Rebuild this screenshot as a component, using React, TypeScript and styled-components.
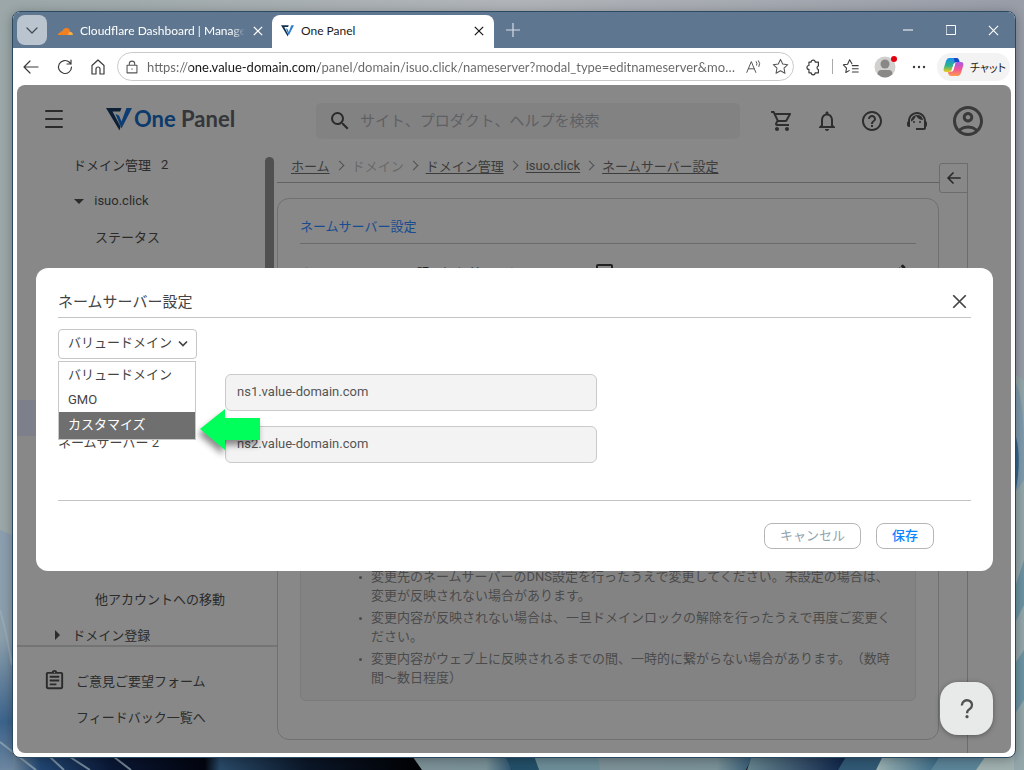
import React from 'react';
import styled, { createGlobalStyle } from 'styled-components';
import {
  MdOutlineShoppingCart,
  MdNotificationsNone,
  MdHelpOutline,
  MdSupportAgent,
  MdOutlineAccountCircle,
  MdSearch,
  MdOutlineAssignment,
  MdArrowDropDown,
  MdArrowRight,
  MdEdit,
} from 'react-icons/md';

const appFont = `Roboto, "Noto Sans CJK JP", sans-serif`;
const chromeFont = `Lato, "Noto Sans CJK JP", sans-serif`;

const GlobalStyle = createGlobalStyle`
  * { box-sizing: border-box; }
  body { margin: 0; font-family: ${appFont}; font-size: 13px; color: #2b2b2b; text-spacing-trim: space-all; }
  button, input, select { font: inherit; color: inherit; }
  button { padding: 0; border: 0; background: none; cursor: pointer; }
  ul, ol { margin: 0; padding: 0; list-style: none; }
  h1, h2, p { margin: 0; font-weight: 400; }
  svg { display: block; flex: none; }
`;

/* ---------- desktop and browser window ---------- */

const Desktop = styled.div`
  position: relative;
  min-height: 100vh;
  padding: 11px 8px 12px 12px;
  display: flex;
  overflow: hidden;
`;

const Wallpaper = styled.svg`
  position: absolute;
  inset: 0;
  width: 100%;
  height: 100%;
`;

const BrowserWindow = styled.div`
  position: relative;
  flex: 1;
  min-width: 0;
  display: flex;
  flex-direction: column;
  background: #fff;
  border: 1px solid #2b4a61;
  border-radius: 8px;
  overflow: hidden;
  box-shadow: 0 2px 12px rgba(0, 0, 0, 0.3);
`;

const TitleBar = styled.div`
  height: 36px;
  padding-left: 4px;
  display: flex;
  align-items: flex-end;
  background: #5e768f;
  color: #fff;
  font-family: ${chromeFont};
`;

const TabSearch = styled.button`
  width: 30px;
  height: 30px;
  margin-bottom: 3px;
  display: grid;
  place-items: center;
  border-radius: 8px;
  background: #b9c4cf;
  color: #454c54;
`;

const Tab = styled.div<{ $active?: boolean }>`
  width: ${(p) => (p.$active ? 222 : 225)}px;
  height: 33px;
  padding: ${(p) => (p.$active ? '0 9px 2px' : '0 8px 2px 10px')};
  display: flex;
  align-items: center;
  gap: 7px;
  font-size: 12px;
  border-radius: 8px 8px 0 0;
  background: ${(p) => (p.$active ? '#fff' : 'none')};
  color: ${(p) => (p.$active ? '#1b1b1b' : '#fff')};
`;

const TabTitle = styled.span<{ $fade?: boolean }>`
  flex: 1;
  min-width: 0;
  overflow: hidden;
  white-space: nowrap;
  ${(p) => p.$fade && 'mask-image: linear-gradient(to right, #000 92%, transparent);'}
`;

const IconButton = styled.button<{ $w?: number }>`
  width: ${(p) => p.$w ?? 24}px;
  height: 28px;
  flex: none;
  display: grid;
  place-items: center;
`;

const NewTabButton = styled(IconButton)`
  height: 36px;
  color: #d5dde5;
`;

const WindowButtons = styled.div`
  margin-left: auto;
  display: flex;
  height: 36px;
  align-items: center;
`;

const Toolbar = styled.div`
  height: 37px;
  padding: 0 5px 0 1px;
  display: flex;
  align-items: center;
  color: #3b3b3b;
`;

const AddressBar = styled.div`
  flex: 1;
  min-width: 0;
  height: 29px;
  margin-left: 3px;
  padding: 0 0 0 2px;
  display: flex;
  align-items: center;
  border: 1px solid #c9c9c9;
  border-radius: 15px;
  color: #555;
`;

const AddressInput = styled.input`
  flex: 1;
  min-width: 0;
  margin: 0 2px 0 3px;
  padding: 0;
  border: 0;
  outline: 0;
  font-family: ${chromeFont};
  font-size: 13px;
  text-overflow: ellipsis;
  color: transparent;
  background: linear-gradient(to right, #666 43px, #151515 43px, #151515 172px, #666 172px);
  background-clip: text;
`;

const Divider = styled.span`
  width: 1px;
  height: 15px;
  background: #aaa;
`;

const Avatar = styled.button`
  position: relative;
  width: 22px;
  height: 22px;
  margin: 0 11px 0 5px;
`;

const AvatarDot = styled.span`
  position: absolute;
  top: 0;
  right: -1px;
  width: 6px;
  height: 6px;
  border-radius: 50%;
  background: #e3000f;
`;

const ChatButton = styled.button`
  height: 28px;
  width: 73px;
  margin-left: 6px;
  padding: 0 0 0 6px;
  display: flex;
  align-items: center;
  gap: 6px;
  border-radius: 14px;
  background: #f3f3f3;
  font-size: 11px;
  font-feature-settings: 'palt';
  white-space: nowrap;
  color: #222;
`;

/* ---------- site page ---------- */

const Page = styled.div`
  position: relative;
  flex: 1;
  margin: 0 4px 4px;
  display: flex;
  flex-direction: column;
  background: #888;
  border-radius: 8px;
  overflow: hidden;
`;

const SiteHeader = styled.header`
  height: 62px;
  padding: 6px 25px 0 28px;
  display: flex;
  align-items: center;
`;

const MenuButton = styled.button`
  width: 18px;
  height: 18px;
  margin-right: 43px;
`;

const Brand = styled.a`
  width: 210px;
  display: flex;
  align-items: center;
  gap: 2px;
  font: 700 22px/24px Lato, sans-serif;
  text-decoration: none;
  color: #34363a;
  white-space: nowrap;
`;

const BrandLead = styled.span`
  color: #0c3a6b;
`;

const SearchBox = styled.label`
  width: 424px;
  height: 36px;
  margin: 4px auto 0 0;
  padding: 0 12px;
  display: flex;
  align-items: center;
  gap: 8px;
  border-radius: 5px;
  background: #828282;
`;

const SearchInput = styled.input`
  flex: 1;
  min-width: 0;
  padding: 0 0 1px;
  border: 0;
  outline: 0;
  background: none;
  font-size: 15px;
  &::placeholder {
    color: #5f6064;
    opacity: 1;
  }
`;

const HeaderIcons = styled.div`
  display: flex;
  align-items: center;
  gap: 21px;
  padding-top: 4px;
  color: #2e2e2e;
`;

const AccountButton = styled.button`
  color: #3a3a3a;
`;

const Body = styled.div`
  flex: 1;
  display: flex;
`;

const Sidebar = styled.nav`
  width: 260px;
  flex: none;
  display: flex;
  flex-direction: column;
`;

const TreePane = styled.div`
  flex: 1 1 0;
  display: flex;
  overflow: hidden;
`;

const Tree = styled.ul`
  flex: 1;
  display: flex;
  flex-direction: column;
`;

const TreeItem = styled.li<{ $indent: number; $selected?: boolean; $gap?: boolean }>`
  height: 36px;
  flex: none;
  margin-top: ${(p) => (p.$gap ? 145 : 0)}px;
  padding: 0 0 1px ${(p) => p.$indent}px;
  display: flex;
  align-items: center;
  background: ${(p) => (p.$selected ? '#7d7f8a' : 'none')};
`;

const TreeLink = styled.a`
  color: #2b2b2b;
  text-decoration: none;
`;

const Count = styled.span`
  margin-left: 10px;
`;

const ScrollThumb = styled.div`
  width: 9px;
  height: 240px;
  margin: 10px 3px 0 0;
  border-radius: 5px;
  background: #505050;
`;

const SideFooter = styled.ul`
  height: 108px;
  padding-top: 15px;
  border-top: 2px solid #747474;
`;

const SideFooterItem = styled.li<{ $indent: number }>`
  height: 36px;
  padding-left: ${(p) => p.$indent}px;
  display: flex;
  align-items: center;
  gap: 10px;
`;

const Main = styled.main`
  flex: 1;
  min-width: 0;
  display: flex;
  flex-direction: column;
`;

const Breadcrumb = styled.ol`
  height: 36px;
  padding: 1px 0 0 14px;
  display: flex;
  align-items: center;
  border-bottom: 1px solid #626262;
  white-space: nowrap;
`;

const Crumb = styled.li`
  display: flex;
  align-items: center;
  color: #686868;
  & + &::before {
    content: '';
    width: 6px;
    height: 6px;
    margin: 0 9px 0 6px;
    border: solid #505050;
    border-width: 1px 1px 0 0;
    rotate: 45deg;
  }
`;

const CrumbLink = styled.a`
  color: #3c3c3c;
  text-decoration: underline;
  text-underline-offset: 2px;
`;

const Card = styled.section`
  flex: 1;
  margin: 15px 0 13px;
  padding: 16px 22px 38px;
  display: flex;
  flex-direction: column;
  border: 1px solid #707070;
  border-radius: 12px;
`;

const CardTitle = styled.h1`
  height: 29px;
  font-size: 13px;
  line-height: 24px;
  color: #174c90;
  border-bottom: 1px solid #6b6b6b;
`;

const StatusRow = styled.div`
  height: 36px;
  margin-top: 10px;
  padding-right: 8px;
  display: flex;
  align-items: center;
  font-size: 13px;
  color: #222;
`;

const HelpBox = styled.span`
  width: 17px;
  height: 17px;
  margin: 0 auto 0 24px;
  display: grid;
  place-items: center;
  border: 2px solid #222;
  border-radius: 2px;
  font-size: 12px;
`;

const Notes = styled.ul`
  height: 180px;
  margin-top: auto;
  padding: 0 22px 13px 58px;
  display: flex;
  flex-direction: column;
  justify-content: flex-end;
  gap: 3px;
  border: 1px solid #7b7b7b;
  border-radius: 6px;
  background: #848383;
  line-height: 19px;
  color: #4b4b4b;
`;

const Note = styled.li`
  display: flex;
  gap: 9px;
  &::before {
    content: '';
    width: 3px;
    height: 3px;
    margin-top: 9px;
    flex: none;
    border-radius: 50%;
    background: #4a4a4a;
  }
`;

const NoteText = styled.p`
  flex: 1;
`;

const ToolRail = styled.aside`
  width: 29px;
  margin: 16px 43px 0 0;
  border-right: 1px solid #6c6c6c;
`;

const CollapseButton = styled.button`
  width: 29px;
  height: 30px;
  display: grid;
  place-items: center;
  border: 1px solid #6c6c6c;
  border-radius: 3px 0 0 3px;
`;

const HelpButton = styled.button`
  position: absolute;
  right: 18px;
  bottom: 18px;
  width: 53px;
  height: 53px;
  display: grid;
  place-items: center;
  border-radius: 18px;
  background: #e8eaea;
  color: #505252;
  box-shadow: 0 1px 5px rgba(0, 0, 0, 0.35);
`;

/* ---------- dialog ---------- */

const Scrim = styled.div`
  position: absolute;
  inset: 0;
  padding: 1px 18px 0 19px;
  display: flex;
  align-items: center;
`;

const Dialog = styled.div`
  flex: 1;
  padding: 20px 22px 22px;
  background: #fff;
  border-radius: 12px;
  color: #444;
`;

const DialogHeader = styled.div`
  height: 30px;
  padding-bottom: 3px;
  display: flex;
  align-items: center;
  justify-content: space-between;
  border-bottom: 1px solid #c4c4c4;
`;

const DialogTitle = styled.h2`
  padding-bottom: 2px;
  font-size: 15px;
`;

const CloseButton = styled.button`
  width: 24px;
  height: 24px;
  display: grid;
  place-items: center;
`;

const Picker = styled.div`
  position: relative;
  width: 139px;
  margin-top: 11px;
`;

const PickerSelect = styled.select`
  width: 100%;
  height: 30px;
  padding: 0 0 3px 9px;
  appearance: none;
  border: 1px solid #c6c6c6;
  border-radius: 4px;
  background: #fff;
`;

const PickerArrow = styled.svg`
  position: absolute;
  top: 11px;
  right: 9px;
  pointer-events: none;
`;

const OptionList = styled.ul`
  position: absolute;
  z-index: 1;
  top: 32px;
  left: 0;
  width: 138px;
  border: 1px solid #c8c8c8;
  background: #fff;
`;

const Option = styled.li<{ $active?: boolean }>`
  height: ${(p) => (p.$active ? 27 : 25)}px;
  padding-left: 9px;
  line-height: 26px;
  background: ${(p) => (p.$active ? '#6f6f6f' : 'none')};
  color: ${(p) => (p.$active ? '#fff' : '#444')};
`;

const Fields = styled.div`
  display: flex;
  flex-direction: column;
  gap: 15px;
  margin-top: 15px;
  padding-bottom: 37px;
  border-bottom: 1px solid #c4c4c4;
`;

const Field = styled.label`
  display: flex;
  height: 37px;
`;

const FieldLabel = styled.span`
  width: 167px;
  line-height: 33px;
`;

const FieldInput = styled.input`
  width: 372px;
  padding: 0 11px 2px;
  border: 1px solid #cacaca;
  border-radius: 6px;
  background: #f3f3f3;
  color: #555;
`;

const Actions = styled.div`
  display: flex;
  justify-content: flex-end;
  gap: 15px;
  margin-top: 22px;
  padding-right: 37px;
`;

const ActionButton = styled.button<{ $primary?: boolean }>`
  height: 26px;
  padding: 0 15px 3px;
  border: 1px solid #b5b5b5;
  border-radius: 8px;
  font-weight: ${(p) => (p.$primary ? 500 : 400)};
  color: ${(p) => (p.$primary ? '#0a84ff' : '#90a4ae')};
`;

const Pointer = styled.svg`
  position: absolute;
  z-index: 2;
  top: 78px;
  left: 140px;
  overflow: visible;
  filter: drop-shadow(-2px 5px 3px rgba(0, 0, 0, 0.45));
`;

const Cross = ({ size, width = 1.2 }: { size: number; width?: number }) => (
  <svg width={size} height={size} viewBox="0 0 12 12" fill="none" stroke="currentColor" strokeWidth={width} aria-hidden="true">
    <path d="M1 1l10 10M11 1L1 11" />
  </svg>
);

const Line = ({ d, size = 20, width = 1.2, box = 20 }: { d: string; size?: number; width?: number; box?: number }) => (
  <svg
    width={size}
    height={size}
    viewBox={`0 0 ${box} ${box}`}
    fill="none"
    stroke="currentColor"
    strokeWidth={width}
    strokeLinecap="round"
    strokeLinejoin="round"
    aria-hidden="true"
  >
    <path d={d} />
  </svg>
);

const PanelMark = ({ width, height, dark, blue }: { width: number; height: number; dark: string; blue: string }) => (
  <svg width={width} height={height} viewBox="0 0 26 23" aria-hidden="true">
    <path d="M0 0h15.500l-1.300 3.500H6.500l8 15-1 4z" fill={dark} />
    <path d="M9.500 6l3.500 1.500 2.500 6L20.500 0H26L15.500 20.500z" fill={blue} />
  </svg>
);

const Scenery = () => (
  <Wallpaper viewBox="0 0 1024 770" preserveAspectRatio="none" aria-hidden="true">
    <defs>
      <linearGradient id="sky">
        <stop offset="0" stopColor="#9ba7a8" />
        <stop offset="0.5" stopColor="#b1b5b9" />
        <stop offset="1" stopColor="#989da8" />
      </linearGradient>
      <linearGradient id="leftPetal" x2="0" y2="1">
        <stop offset="0" stopColor="#8c9fb0" />
        <stop offset="0.45" stopColor="#8c9fac" />
        <stop offset="0.8" stopColor="#3c648c" />
        <stop offset="1" stopColor="#6c86a0" />
      </linearGradient>
      <linearGradient id="floor">
        <stop offset="0" stopColor="#8fa2ac" />
        <stop offset="0.04" stopColor="#214673" />
        <stop offset="0.11" stopColor="#0a1734" />
        <stop offset="0.2" stopColor="#03050f" />
        <stop offset="0.215" stopColor="#294a68" />
        <stop offset="0.3" stopColor="#0b1728" />
        <stop offset="0.4" stopColor="#020307" />
      </linearGradient>
      <linearGradient id="petalA">
        <stop offset="0" stopColor="#7d9298" />
        <stop offset="0.75" stopColor="#7a9298" />
        <stop offset="1" stopColor="#2d5571" />
      </linearGradient>
      <linearGradient id="petalB">
        <stop offset="0" stopColor="#66858f" />
        <stop offset="1" stopColor="#0a1f46" />
      </linearGradient>
      <linearGradient id="petalC">
        <stop offset="0" stopColor="#9db3b4" />
        <stop offset="1" stopColor="#2f6281" />
      </linearGradient>
    </defs>
    <rect width="1024" height="770" fill="url(#sky)" />
    <path d="M0 750h1024v20H0z" fill="url(#floor)" />
    <path d="M0 530l13 5v235H0z" fill="url(#leftPetal)" />
    <path d="M0 610q6 20 12 55M0 742l36 28M50 757l14 13M70 757l20 13M114 757l17 13" stroke="#9dafbb" strokeWidth="2" fill="none" opacity="0.7" />
    <path d="M408 750h96l8 20h-90z" fill="url(#petalA)" />
    <path d="M502 750h32l5 20h-27z" fill="#235069" />
    <path d="M532 750h68v20h-61z" fill="#6d8e99" />
    <path d="M598 750h158l-10 20H600z" fill="url(#petalA)" />
    <path d="M754 750h98l-12 20h-93z" fill="url(#petalB)" />
    <path d="M850 750h38l-10 20h-40z" fill="#315a76" />
    <path d="M886 750h60l-13 20h-57z" fill="url(#petalC)" />
    <path d="M944 750h48l-14 20h-47z" fill="#5c8599" />
    <path d="M990 750h34v20h-48z" fill="#a0b1b0" />
    <path d="M1014 375q6 1 10 6v389h-10z" fill="#94a7aa" />
    <path d="M1014 380q9 12 10 60v40l-10 14z" fill="#7f9bad" />
    <path d="M1014 430q9 25 1 65z" fill="#34678f" />
    <path d="M1024 560v45l-10 20v-35zM1024 650v50l-10 15v-50z" fill="#6c94a4" />
  </Wallpaper>
);

const notes = [
  '変更先のネームサーバーのDNS設定を行ったうえで変更してください。未設定の場合は、変更が反映されない場合があります。',
  '変更内容が反映されない場合は、一旦ドメインロックの解除を行ったうえで再度ご変更ください。',
  '変更内容がウェブ上に反映されるまでの間、一時的に繋がらない場合があります。（数時間〜数日程度）',
];

const crumbs = [
  { text: 'ホーム', link: true },
  { text: 'ドメイン', link: false },
  { text: 'ドメイン管理', link: true },
  { text: 'isuo.click', link: true },
  { text: 'ネームサーバー設定', link: true },
];

const starPath = 'M10 2.500l2.300 4.900 5.300.7-3.900 3.700 1 5.300L10 14.500l-4.700 2.600 1-5.300L2.400 8.100l5.300-.7z';

export default function App() {
  return (
    <Desktop>
      <GlobalStyle />
      <Scenery />
      <BrowserWindow>
        <TitleBar>
          <TabSearch aria-label="タブの検索">
            <Line d="M5 8l5 5 5-5" width={1.300} />
          </TabSearch>
          <Tab>
            <svg width="16" height="16" viewBox="0 0 16 16" aria-hidden="true">
              <path d="M1 12c0-1.600 1-2.500 2.300-2.600.1-1 1.300-1.400 2-.9C6 6 7.600 5 9.400 5c2 0 3.300 1.300 3.600 3l-1.600 4z" fill="#f38020" />
              <path d="M11 12l1-3c2-.6 3.800.8 3.900 3z" fill="#fbad41" />
            </svg>
            <TabTitle $fade>Cloudflare Dashboard | Manage Yo</TabTitle>
            <IconButton $w={12} aria-label="タブを閉じる"><Cross size={10} width={1.500} /></IconButton>
          </Tab>
          <Tab $active>
            <PanelMark width={13} height={12} dark="#12304f" blue="#2f7fd0" />
            <TabTitle>One Panel</TabTitle>
            <IconButton $w={12} aria-label="タブを閉じる"><Cross size={10} width={1.500} /></IconButton>
          </Tab>
          <NewTabButton $w={38} aria-label="新しいタブ">
            <Line d="M7 0v14M0 7h14" size={14} box={14} />
          </NewTabButton>
          <WindowButtons>
            <IconButton $w={43} aria-label="最小化"><Line d="M0 5h10" size={10} box={10} width={1} /></IconButton>
            <IconButton $w={43} aria-label="最大化"><Line d="M.5.5h9v9h-9z" size={10} box={10} width={1} /></IconButton>
            <IconButton $w={43} aria-label="閉じる"><Cross size={11} /></IconButton>
          </WindowButtons>
        </TitleBar>

        <Toolbar>
          <IconButton $w={34} aria-label="戻る"><Line d="M17 10H3M9 4l-6 6 6 6" /></IconButton>
          <IconButton $w={34} aria-label="更新"><Line d="M16.500 10a6.500 6.500 0 1 1-2-4.700L16 7M16 3v4h-4" /></IconButton>
          <IconButton $w={32} aria-label="ホーム"><Line d="M4 8.500l6-5.500 6 5.500V17h-4v-5a2 2 0 0 0-4 0v5H4z" /></IconButton>
          <AddressBar>
            <IconButton aria-label="サイト情報">
              <Line d="M4.500 8h11v8.500h-11zM7 8V6.500a3 3 0 0 1 6 0V8M10 12v.5" size={18} />
            </IconButton>
            <AddressInput
              aria-label="アドレス"
              defaultValue="https://one.value-domain.com/panel/domain/isuo.click/nameserver?modal_type=editnameserver&modal_id=1"
            />
            <IconButton $w={26} aria-label="音声で読み上げる">
              <Line d="M2 16L7 4l5 12M4 12h6M12.500 4q1.500 2 .5 4M15 3q2.500 3 .5 6.500" size={18} width={1.100} />
            </IconButton>
            <IconButton $w={26} aria-label="お気に入りに追加"><Line d={starPath} size={19} width={1.100} /></IconButton>
          </AddressBar>
          <IconButton $w={38} aria-label="拡張機能">
            <Line d="M5.500 4.500h2.500a2.200 2.200 0 0 1 4.400 0H16v4.200a2.200 2.200 0 0 0 0 4.200V16.500h-3.600a2.200 2.200 0 0 1-4.400 0H5.500v-3.800a2.200 2.200 0 0 1 0-4.400z" size={18} width={1.300} />
          </IconButton>
          <Divider />
          <IconButton $w={36} aria-label="お気に入り">
            <Line d="M11 6.500L8.500 2 6.200 6.900l-4.700.7 3.500 3.600-.8 5L8 14M11.500 8.500H18M11.500 12H18M11.500 15.500H18" size={18} />
          </IconButton>
          <Avatar aria-label="プロファイル">
            <svg width="22" height="22" viewBox="0 0 22 22" aria-hidden="true">
              <circle cx="11" cy="11" r="10.500" fill="#d2d0ce" />
              <circle cx="11" cy="8" r="4.500" fill="#8a8886" />
              <path d="M3.500 18.300q0-4.300 4-4.300h7q4 0 4 4.300Q15 21.500 11 21.500t-7.500-3.200z" fill="#8a8886" />
            </svg>
            <AvatarDot />
          </Avatar>
          <IconButton $w={24} aria-label="設定など">
            <svg width="14" height="4" viewBox="0 0 14 4" fill="currentColor" aria-hidden="true">
              <circle cx="2" cy="2" r="1.200" /><circle cx="7" cy="2" r="1.200" /><circle cx="12" cy="2" r="1.200" />
            </svg>
          </IconButton>
          <ChatButton>
            <svg width="21" height="20" viewBox="0 0 21 20" aria-hidden="true">
              <defs>
                <linearGradient id="copilotLeft" x2="0" y2="1">
                  <stop offset="0" stopColor="#1a8df0" /><stop offset="0.55" stopColor="#2bb58b" /><stop offset="1" stopColor="#f6c915" />
                </linearGradient>
                <linearGradient id="copilotRight" x2="0" y2="1">
                  <stop offset="0" stopColor="#a45ae8" /><stop offset="0.5" stopColor="#f0559a" /><stop offset="1" stopColor="#ff9a4a" />
                </linearGradient>
              </defs>
              <path d="M6 1h7q2 0 2.600 2l.6 2h-3q-2 0-2.600 2l-2 6q-.6 2-2.600 2H3Q0 15 .7 11.500L3 4Q4 1 6 1z" fill="url(#copilotLeft)" />
              <path d="M11 1h2.500q2 0 2.500 2l.6 2h-3q-1.500 0-2 1z" fill="#1647c8" />
              <path d="M15 19H8q-2 0-2.600-2l-.4-2h2q2 0 2.600-2l2-6q.6-2 2.600-2H18q3 0 2.300 3.500L18 16q-1 3-3 3z" fill="url(#copilotRight)" />
              <path d="M10.500 7.500l2-1.500-2 7q-.6 1.700-2 1.500z" fill="#fff" />
            </svg>
            チャット
          </ChatButton>
        </Toolbar>

        <Page>
          <SiteHeader>
            <MenuButton aria-label="メニュー">
              <Line d="M1 1h16M1 9h16M1 17h16" size={18} box={18} width={2} />
            </MenuButton>
            <Brand href="#home">
              <PanelMark width={26} height={23} dark="#0d2036" blue="#0d3d72" />
              <span><BrandLead>One</BrandLead> Panel</span>
            </Brand>
            <SearchBox>
              <MdSearch size={24} color="#2a2a2a" aria-hidden="true" />
              <SearchInput aria-label="検索" placeholder="サイト、プロダクト、ヘルプを検索" />
            </SearchBox>
            <HeaderIcons>
              <button aria-label="カート"><MdOutlineShoppingCart size={24} /></button>
              <button aria-label="お知らせ"><MdNotificationsNone size={24} /></button>
              <button aria-label="ヘルプ"><MdHelpOutline size={24} /></button>
              <button aria-label="サポート"><MdSupportAgent size={24} /></button>
              <AccountButton aria-label="アカウント"><MdOutlineAccountCircle size={36} /></AccountButton>
            </HeaderIcons>
          </SiteHeader>

          <Body>
            <Sidebar>
              <TreePane>
                <Tree>
                  <TreeItem $indent={56}><TreeLink href="#domains">ドメイン管理</TreeLink><Count>2</Count></TreeItem>
                  <TreeItem $indent={50}><MdArrowDropDown size={24} /><TreeLink href="#isuo">&nbsp;isuo.click</TreeLink></TreeItem>
                  <TreeItem $indent={78}><TreeLink href="#status">ステータス</TreeLink></TreeItem>
                  <TreeItem $indent={78} $gap $selected><TreeLink href="#nameserver">ネームサーバー設定</TreeLink></TreeItem>
                  <TreeItem $indent={78} $gap><TreeLink href="#transfer">他アカウントへの移動</TreeLink></TreeItem>
                  <TreeItem $indent={28}><MdArrowRight size={24} /><TreeLink href="#register">&nbsp;ドメイン登録</TreeLink></TreeItem>
                </Tree>
                <ScrollThumb />
              </TreePane>
              <SideFooter>
                <SideFooterItem $indent={26}>
                  <MdOutlineAssignment size={23} />
                  <TreeLink href="#feedback">ご意見ご要望フォーム</TreeLink>
                </SideFooterItem>
                <SideFooterItem $indent={59}><TreeLink href="#feedbacks">フィードバック一覧へ</TreeLink></SideFooterItem>
              </SideFooter>
            </Sidebar>

            <Main>
              <Breadcrumb>
                {crumbs.map((c) => (
                  <Crumb key={c.text}>{c.link ? <CrumbLink href="#">{c.text}</CrumbLink> : c.text}</Crumb>
                ))}
              </Breadcrumb>
              <Card>
                <CardTitle>ネームサーバー設定</CardTitle>
                <StatusRow>
                  ネームサーバーは下記に切り替えられています
                  <HelpBox>?</HelpBox>
                  <MdEdit size={20} />
                </StatusRow>
                <Notes>
                  {notes.map((n) => (
                    <Note key={n}><NoteText>{n}</NoteText></Note>
                  ))}
                </Notes>
              </Card>
            </Main>

            <ToolRail>
              <CollapseButton aria-label="パネルを開く"><Line d="M16 10H4M9 5l-5 5 5 5" width={1.700} /></CollapseButton>
            </ToolRail>
          </Body>

          <Scrim>
            <Dialog role="dialog" aria-labelledby="dialog-title">
              <DialogHeader>
                <DialogTitle id="dialog-title">ネームサーバー設定</DialogTitle>
                <CloseButton aria-label="閉じる"><Cross size={15} width={1.400} /></CloseButton>
              </DialogHeader>
              <Picker>
                <PickerSelect aria-label="ネームサーバーの種類" defaultValue="value">
                  <option value="value">バリュードメイン</option>
                  <option value="gmo">GMO</option>
                  <option value="custom">カスタマイズ</option>
                </PickerSelect>
                <PickerArrow width="10" height="8" viewBox="0 0 10 8" fill="none" stroke="#444" strokeWidth="1.700">
                  <path d="M1 1.500l4 4 4-4" />
                </PickerArrow>
                <OptionList role="listbox" aria-label="ネームサーバーの種類">
                  <Option role="option">バリュードメイン</Option>
                  <Option role="option">GMO</Option>
                  <Option role="option" aria-selected="true" $active>カスタマイズ</Option>
                </OptionList>
                <Pointer width="62" height="42" viewBox="0 0 62 42" aria-hidden="true">
                  <path d="M2 22L27 2v9h35v22H27v10z" fill="#00ff5a" />
                </Pointer>
              </Picker>
              <Fields>
                <Field><FieldLabel>ネームサーバー 1</FieldLabel><FieldInput readOnly value="ns1.value-domain.com" /></Field>
                <Field><FieldLabel>ネームサーバー 2</FieldLabel><FieldInput readOnly value="ns2.value-domain.com" /></Field>
              </Fields>
              <Actions>
                <ActionButton>キャンセル</ActionButton>
                <ActionButton $primary>保存</ActionButton>
              </Actions>
            </Dialog>
          </Scrim>
          <HelpButton aria-label="ヘルプ">
            <svg width="14" height="20" viewBox="0 0 14 20" fill="none" stroke="currentColor" strokeWidth="2.300" aria-hidden="true">
              <path d="M2 6.500a5 4.700 0 1 1 8 3.200Q7 11.500 7 14.200" />
              <circle cx="7" cy="17.700" r="1.600" fill="currentColor" stroke="none" />
            </svg>
          </HelpButton>
        </Page>
      </BrowserWindow>
    </Desktop>
  );
}
